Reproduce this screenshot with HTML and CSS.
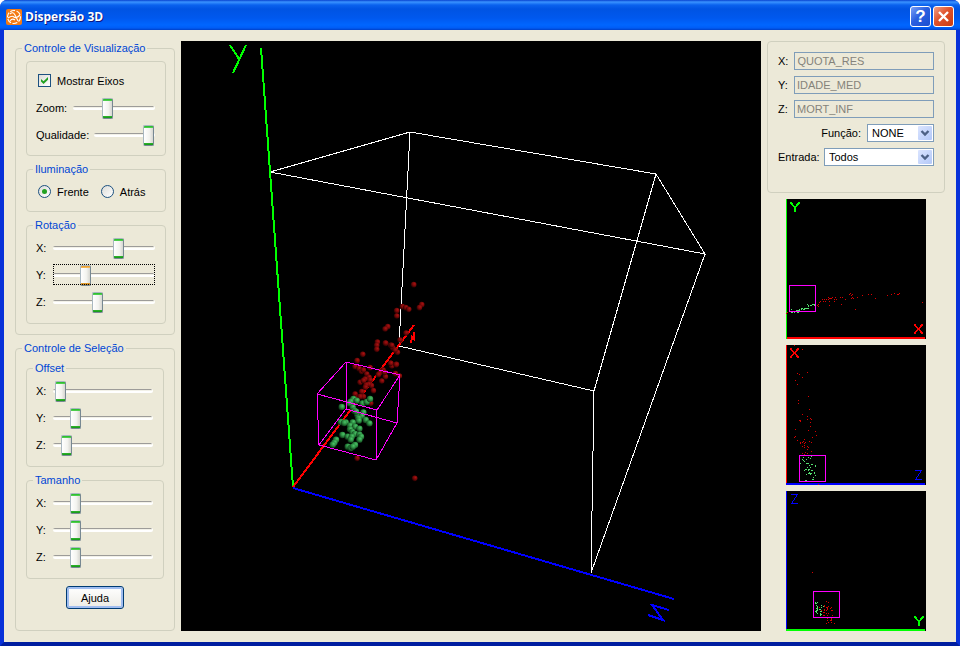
FILE: index.html
```html
<!DOCTYPE html>
<html lang="pt-BR">
<head>
<meta charset="utf-8">
<title>Dispersão 3D</title>
<link rel="stylesheet" href="styles.css">
</head>
<body>
<div class="window">
  <header class="titlebar">
    <svg class="app-icon" viewBox="0 0 16 16" aria-hidden="true">
      <rect width="16" height="16" rx="2" fill="#f47a12"/>
      <circle cx="8" cy="8" r="6.5" fill="none" stroke="#fff" stroke-width="1.2" stroke-dasharray="5 1.5"/>
      <path d="M2 9Q6 6 8 8T14 6M4 5Q7 2 9 6T12 12M4 12Q6 9 9 11" fill="none" stroke="#fff" stroke-width="1.1"/>
    </svg>
    <h1>Dispersão 3D</h1>
    <button class="caption-button help" type="button" aria-label="Ajuda da janela">?</button>
    <button class="caption-button close" type="button" aria-label="Fechar">
      <svg viewBox="0 0 19 19" aria-hidden="true"><path d="M5 5L14 14M14 5L5 14" stroke="#fff" stroke-width="2.4"/></svg>
    </button>
  </header>

  <main class="content">
    <form class="controls">
      <fieldset class="group view">
        <legend>Controle de Visualização</legend>
        <div class="box general">
          <div class="row choice"><input type="checkbox" id="axes" checked><label for="axes">Mostrar Eixos</label></div>
          <div class="row"><label class="label-zoom" for="zoom">Zoom:</label><input type="range" id="zoom" value="41"></div>
          <div class="row"><label class="label-quality" for="quality">Qualidade:</label><input type="range" id="quality" value="100"></div>
        </div>
        <fieldset class="box lighting">
          <legend>Iluminação</legend>
          <div class="row choice">
            <input type="radio" name="light" id="front" checked><label class="first-option" for="front">Frente</label>
            <input type="radio" name="light" id="back"><label for="back">Atrás</label>
          </div>
        </fieldset>
        <fieldset class="box">
          <legend>Rotação</legend>
          <div class="row"><label class="axis" for="rx">X:</label><input type="range" id="rx" value="67"></div>
          <div class="row"><label class="axis" for="ry">Y:</label><input type="range" class="active" id="ry" value="30"></div>
          <div class="row"><label class="axis" for="rz">Z:</label><input type="range" id="rz" value="43"></div>
        </fieldset>
      </fieldset>

      <fieldset class="group selection">
        <legend>Controle de Seleção</legend>
        <fieldset class="box">
          <legend>Offset</legend>
          <div class="row"><label class="axis" for="ox">X:</label><input type="range" id="ox" value="2"></div>
          <div class="row"><label class="axis" for="oy">Y:</label><input type="range" id="oy" value="19"></div>
          <div class="row"><label class="axis" for="oz">Z:</label><input type="range" id="oz" value="9"></div>
        </fieldset>
        <fieldset class="box">
          <legend>Tamanho</legend>
          <div class="row"><label class="axis" for="sx">X:</label><input type="range" id="sx" value="19"></div>
          <div class="row"><label class="axis" for="sy">Y:</label><input type="range" id="sy" value="19"></div>
          <div class="row"><label class="axis" for="sz">Z:</label><input type="range" id="sz" value="19"></div>
        </fieldset>
        <button class="push" type="button">Ajuda</button>
      </fieldset>
    </form>

    <div class="scene">
      <svg viewBox="181 41 580 590" role="img" aria-label="Gráfico de dispersão 3D">
        <defs>
          <radialGradient id="red-ball" cx=".65" cy=".35" r=".7"><stop offset="0" stop-color="#a81212"/><stop offset=".5" stop-color="#760808"/><stop offset="1" stop-color="#200000"/></radialGradient>
          <radialGradient id="green-ball" cx=".65" cy=".35" r=".7"><stop offset="0" stop-color="#4cc468"/><stop offset=".5" stop-color="#2b8a40"/><stop offset="1" stop-color="#0b2f14"/></radialGradient>
        </defs>
        <g fill="none" shape-rendering="crispEdges">
          <path stroke="#fff" d="M270 172L410 132L656 174L705 254ZM410 132L399 346L594 391L656 174M594 391L591 573L705 254"/>
          <g stroke-width="2">
            <path stroke="#0f0" d="M261 48L293 487M230 45L239 59M246 45L233 73"/>
            <path stroke="#00f" d="M293 488L674 599M669 610L652 605L663 620L648 615"/>
            <path stroke="#f00" d="M293 487L414 325M411 343L412 337L414 339L414 332"/>
          </g>
        </g>
        <g id="balls"></g>
        <path fill="none" stroke="#f0f" shape-rendering="crispEdges" d="M346 362L400 375L377 410L317 394ZM346 409L397 423L376 460L319 445ZM346 362V409M400 375L397 423M377 410L376 460M317 394L319 445"/>
      </svg>
    </div>

    <aside class="side">
      <form class="box variables">
        <div class="field"><label for="vx">X:</label><input type="text" id="vx" value="QUOTA_RES" disabled></div>
        <div class="field"><label for="vy">Y:</label><input type="text" id="vy" value="IDADE_MED" disabled></div>
        <div class="field"><label for="vz">Z:</label><input type="text" id="vz" value="MORT_INF" disabled></div>
        <div class="field pick"><label for="fn">Função:</label>
          <span class="combo short"><select id="fn"><option>NONE</option></select><svg viewBox="0 0 14 14" aria-hidden="true"><path d="M3.5 5L7 8.5L10.5 5" fill="none" stroke="#4d6185" stroke-width="2.4"/></svg></span></div>
        <div class="field pick"><label for="in">Entrada:</label>
          <span class="combo long"><select id="in"><option>Todos</option></select><svg viewBox="0 0 14 14" aria-hidden="true"><path d="M3.5 5L7 8.5L10.5 5" fill="none" stroke="#4d6185" stroke-width="2.4"/></svg></span></div>
      </form>
      <svg class="plot" id="plot-xy" viewBox="18 12 420 420" shape-rendering="crispEdges" role="img" aria-label="Projeção X Y">
        <path fill="#0f0" d="M18 12h3v420h-3z"/><path fill="#f00" d="M21 426h414v6H21z"/>
        <path class="letter" stroke="#0f0" d="M31 22L45 37L59 22M45 36V51"/>
        <path class="letter" stroke="#f00" d="M403 388L428 416M428 388L403 416"/>
        <g class="points"></g>
        <rect class="selection-frame" x="28.5" y="271.5" width="78" height="78"/>
      </svg>
      <svg class="plot" id="plot-zx" viewBox="18 15 420 420" shape-rendering="crispEdges" role="img" aria-label="Projeção Z X">
        <path fill="#f00" d="M18 15h3v417h-3z"/><path fill="#00f" d="M18 429h417v6H18z"/>
        <path class="letter" stroke="#f00" d="M31 25L56 53M56 25L31 53"/>
        <path class="letter thin" stroke="#00f" d="M405 391H425L407 418H427"/>
        <g class="points"></g>
        <rect class="selection-frame" x="58.5" y="346.5" width="78" height="78"/>
      </svg>
      <svg class="plot" id="plot-yz" viewBox="18 15 420 420" shape-rendering="crispEdges" role="img" aria-label="Projeção Y Z">
        <path fill="#00f" d="M18 15h3v417h-3z"/><path fill="#0f0" d="M18 429h417v6H18z"/>
        <path class="letter thin" stroke="#00f" d="M33 25H53L35 52H55"/>
        <path class="letter" stroke="#0f0" d="M403 391L417 406L431 391M417 405V420"/>
        <g class="points"></g>
        <rect class="selection-frame" x="100.5" y="316.5" width="78" height="78"/>
      </svg>
    </aside>
  </main>
</div>
<script src="plots.js"></script>
</body>
</html>
```
FILE: styles.css
```css
* { box-sizing: border-box; }

body {
  margin: 0;
  background: #fff;
  color: #000;
  font: 11px/14px "Liberation Sans", Arial, sans-serif;
}

.window {
  display: flex;
  flex-direction: column;
  min-height: 100vh;
  border: solid #0842dc;
  border-width: 0 4px 4px;
  border-color: #0842dc #0831d9 #001ea0 #0831d9;
  border-radius: 7px 7px 0 0;
  background: #0050e6;
}

.titlebar {
  display: flex;
  align-items: center;
  gap: 2px;
  height: 30px;
  margin: 0 -4px;
  padding: 3px 6px 0;
  border-radius: 7px 7px 0 0;
  background: linear-gradient(#0842d0 0, #3a93ff 2px, #0a62ee 5px, #0054e3 9px, #0058ee 18px, #0066ff 25px, #005cf5 28px, #0040c8 30px);
}

.app-icon { width: 16px; height: 16px; }

.titlebar h1 {
  flex: 1;
  margin: 0;
  padding-left: 1px;
  color: #fff;
  font: bold 12px/16px "Open Sans", sans-serif;
  text-shadow: 1px 1px #0a1883;
}

.caption-button {
  display: grid;
  place-items: center;
  width: 21px;
  height: 21px;
  padding: 0;
  border: 1px solid #fff;
  border-radius: 3px;
  color: #fff;
  font: bold 17px/19px "Liberation Sans", sans-serif;
}

.caption-button svg { width: 19px; height: 19px; }
.help { background: linear-gradient(135deg, #7ba0f5, #2a5fe0 45%, #1c4fd0); }
.close { background: linear-gradient(135deg, #f0a088, #e0522c 45%, #cc3c10); }

.content {
  flex: 1;
  display: grid;
  grid-template-columns: 160px minmax(0, 1fr) 178px;
  gap: 6px;
  padding: 11px;
  background: #ece9d8;
}

.controls, .side { display: flex; flex-direction: column; gap: 6px; }

fieldset { min-width: 0; margin: 0; }

.group, .box { border: 1px solid #d0d0bf; border-radius: 4px; }
.group { padding: 6px 8px 10px 10px; }
.group.selection { flex: 1; padding-right: 10px; }
.group > .box + .box { margin-top: 6px; }
.box { padding: 2px 10px 8px 9px; }
.general { padding: 5px 10px 7px 9px; }
.lighting { padding-bottom: 6px; }

legend { padding: 0 2px; color: #0046d5; line-height: 14px; }
.group > legend { margin-left: -4px; }
.box > legend { margin-left: -3px; }

.row { display: flex; align-items: center; height: 27px; }
.choice { padding-left: 2px; gap: 6px; }
.first-option { margin-right: 6px; }
.axis { width: 17px; }
.label-zoom { width: 37px; }
.label-quality { width: 58px; }

input[type="checkbox"], input[type="radio"] {
  appearance: none;
  display: grid;
  place-items: center;
  width: 13px;
  height: 13px;
  margin: 0;
  border: 1px solid #1c5180;
  background: linear-gradient(135deg, #dcdcd7, #fff);
}

input[type="radio"] { border-radius: 50%; }

input[type="checkbox"]:checked::before {
  content: "";
  width: 7px;
  height: 7px;
  background: #21a121;
  clip-path: polygon(0 28%, 36% 62%, 100% 0, 100% 38%, 36% 100%, 0 66%);
}

input[type="radio"]:checked::before {
  content: "";
  width: 5px;
  height: 5px;
  border-radius: 50%;
  background: #21a121;
}

input[type="range"] {
  appearance: none;
  flex: 1;
  min-width: 0;
  height: 21px;
  margin: 0;
  background: none;
}

input[type="range"]::-webkit-slider-runnable-track {
  height: 4px;
  border: solid #fff;
  border-width: 0 1px 2px 0;
  border-radius: 2px;
  background: linear-gradient(#9d9c99 1px, #f2f1e8 1px);
}

input[type="range"]::-webkit-slider-thumb {
  appearance: none;
  width: 11px;
  height: 21px;
  margin-top: -8px;
  border: 1px solid #8797a4;
  border-color: #a9b7c0 #778892 #778892 #a9b7c0;
  border-radius: 2px;
  background: linear-gradient(#21b921 0, #5bd35b 2px, transparent 2px, transparent 17px, #2fb52f 17px, #159515), linear-gradient(90deg, #fff, #f3f3ef 60%, #d6d6d0);
}

input[type="range"].active { outline: 1px dotted #000; outline-offset: -1px; }

input[type="range"].active::-webkit-slider-thumb {
  background: linear-gradient(#e5972d 0, #f8c060 2px, transparent 2px, transparent 17px, #e5a030 17px, #cf8a20), linear-gradient(90deg, #fff, #f3f3ef 60%, #d6d6d0);
}

.push {
  display: block;
  width: 58px;
  height: 23px;
  margin: 7px auto 0 40px;
  padding: 0;
  border: 1px solid #003c74;
  border-radius: 3px;
  background: linear-gradient(#fff, #ecebe5);
  box-shadow: inset 0 0 0 2px #a0bdf0;
  font: inherit;
}

.scene { display: flex; background: #000; }
.scene svg { display: block; width: 100%; height: 100%; }

.variables {
  display: flex;
  flex-direction: column;
  gap: 6px;
  padding: 10px 10px 26px;
}

.field { display: flex; align-items: center; gap: 6px; height: 18px; }
.field > label { min-width: 10px; }
.pick { justify-content: flex-end; }

.field input, .field select {
  width: 100%;
  min-width: 0;
  height: 18px;
  margin: 0;
  padding: 0 2px;
  border: 1px solid #7f9db9;
  border-radius: 0;
  font: inherit;
}

.field input { flex: 1; background: #ece9d8; color: #85837a; }
.field select { appearance: none; padding: 0 4px; background: #fff; color: #000; }

.combo { position: relative; flex: none; height: 18px; }
.short { width: 67px; }
.long { width: 110px; }

.combo svg {
  position: absolute;
  top: 2px;
  right: 2px;
  width: 14px;
  height: 14px;
  border-radius: 1px;
  background: linear-gradient(135deg, #dbe5ff, #b3c8f8);
  pointer-events: none;
}

.plot { display: block; width: 140px; height: 140px; align-self: center; background: #000; }
.letter { fill: none; stroke-width: 5; }
.thin { stroke-width: 3; }
.selection-frame { fill: none; stroke: #f0f; stroke-width: 3; }
```
FILE: plots.js
```js
const SVG = "http://www.w3.org/2000/svg";

function add(parent, tag, attributes) {
  const node = document.createElementNS(SVG, tag);
  for (const name in attributes) node.setAttribute(name, attributes[name]);
  parent.appendChild(node);
}

function pairs(text) {
  return text.trim().split(/\s+/).map(pair => pair.split(",").map(Number));
}

// Coordinates of the spheres are in thirds of a scene unit, from each cluster's origin.
function balls(x0, y0, fill, text) {
  const parent = document.getElementById("balls");
  for (const [x, y] of pairs(text)) {
    add(parent, "circle", { cx: x0 + x / 3, cy: y0 + y / 3, r: fill === "green-ball" ? 3.2 : 2.8, fill: `url(#${fill})` });
  }
}

balls(300, 340, "red-ball", `232,6 230,16 230,28 257,10 272,16 278,24 292,37 285,30 188,43 171,62 165,80 177,86 184,94
  190,90 210,83 200,102 207,112 210,120 195,117 180,127 190,122 214,137 205,133 198,135 220,152 196,142 185,155
  165,162 173,172 190,170 180,170 212,190 245,123 249,90 256,110 240,98 235,104 253,97 272,70 289,73 275,78 286,101
  298,108 171,355 344,415`);
balls(340, 270, "red-ball", `221,44 187,110 197,113 206,118 170,122 170,138 245,104 238,113 143,170 135,177 198,189
  180,210 136,219 155,226 152,280 168,284`);
balls(300, 340, "green-ball", `160,177 152,185 170,182 187,190 200,186 210,177 125,201 148,190 158,202 163,212 190,217
  172,225 185,228 175,235 168,215 197,240 208,250 176,242 122,246 137,247 132,249 158,247 150,257 165,260 178,266
  150,268 157,276 165,282 178,284 183,290 127,285 143,290 155,290 152,299 178,299 108,299 103,308 98,314 165,315
  143,320 152,324 158,320`);

// Each plotted point is one 3 x 3 cell of its projection.
function points(id, fill, text) {
  const parent = document.querySelector(`#${id} .points`);
  for (const [x, y] of pairs(text)) {
    add(parent, "rect", { x: Math.floor(x / 3) * 3, y: Math.floor(y / 3) * 3, width: 3, height: 3, fill });
  }
}

const RED = "#d80000";
const GREEN = "#55e070";

points("plot-xy", RED, `18,354 21,352 112,331 115,334 115,328 118,322 121,319 127,313 133,313 139,313 145,313 130,319
  136,319 148,319 145,307 148,310 154,310 157,307 151,310 163,313 169,313 166,307 163,319 148,331 181,307 187,307 184,328
  196,313 208,298 211,295 214,301 217,298 217,307 214,310 220,310 232,307 226,343 247,301 265,298 274,298 286,310
  322,301 334,298 343,295 352,298 355,298 358,295 427,322`);
points("plot-xy", GREEN, `34,343 34,352 37,352 43,352 49,349 52,352 55,352 49,346 52,346 55,346 58,343 58,346 64,343
  64,340 67,340 70,343 73,343 73,340 76,340 79,340 82,340 85,340 85,334 85,331 82,328 91,331 94,331 97,328 100,328 103,328 103,331`);
points("plot-zx", RED, `43,15 67,28 52,100 58,103 67,112 82,97 46,121 52,133 85,169 55,181 55,190 88,208 67,223 82,229
  82,238 91,235 94,238 58,241 61,241 61,244 91,247 91,259 46,268 85,271 106,274 109,286 46,289 43,292 97,292 52,301
  73,298 70,304 67,307 61,307 61,310 73,310 76,307 88,304 94,307 73,316 67,319 73,322 82,319 85,322 82,328 94,334
  76,337 67,340 82,340 73,343 115,433`);
points("plot-zx", GREEN, `94,349 70,352 85,352 91,355 67,358 79,358 70,361 73,364 61,370 79,370 82,370 85,370 88,376
  94,373 97,373 106,376 106,379 82,382 91,382 79,388 76,388 85,388 88,388 73,391 85,391 94,391 97,391 88,397 103,397
  103,400 79,403 85,400 88,400 91,400 94,400 91,403 106,406 100,412 97,418 100,418 76,421 79,421`);
points("plot-yz", RED, `97,259 139,346 145,349 133,358 133,361 118,364 139,364 142,367 145,361 142,364 154,364 151,367
  142,370 139,373 154,373 157,373 133,370 133,373 124,373 130,379 133,379 139,382 145,382 142,388 130,388 133,388
  157,388 142,397 154,397 154,400 142,403 151,403 154,403 145,409 154,409 139,412 163,412`);
points("plot-yz", GREEN, `106,349 112,349 106,352 109,352 109,358 124,358 112,361 130,361 124,364 109,367 112,364
  112,367 112,370 118,370 121,370 109,373 112,373 106,376 109,376 109,379 121,376 124,376 112,382 121,382 121,385
  124,385 121,388`);
```
